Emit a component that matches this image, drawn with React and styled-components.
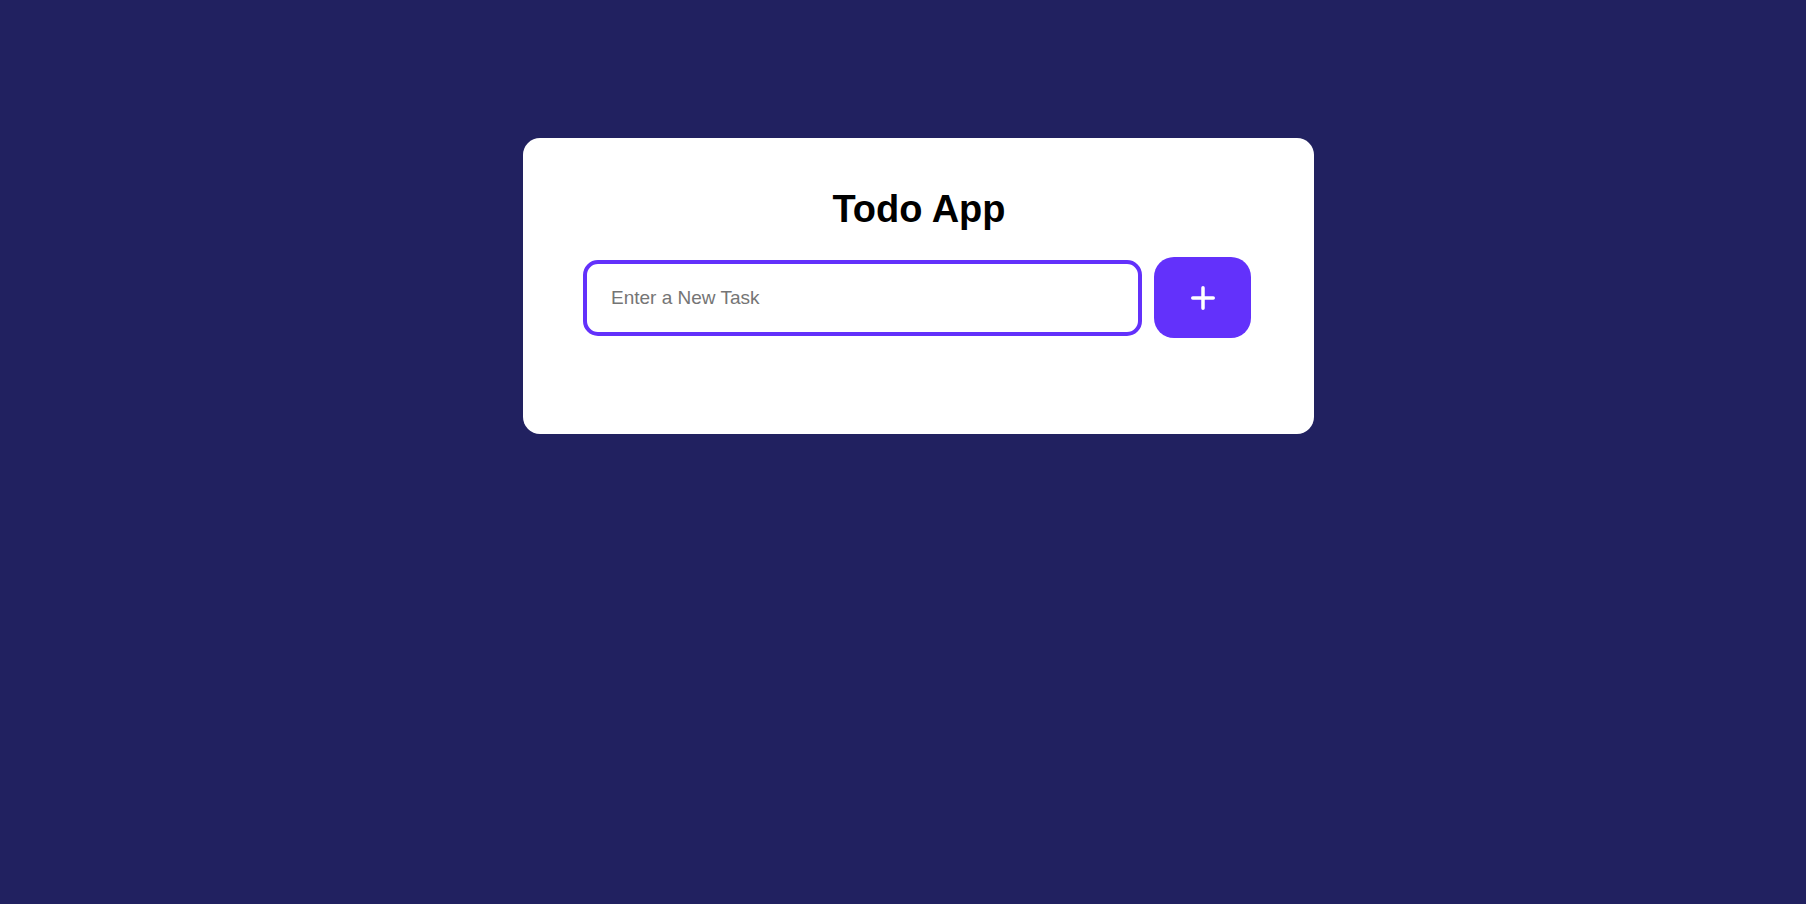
import React, { useState } from "react";
import styled, { createGlobalStyle } from "styled-components";

const GlobalStyle = createGlobalStyle`
  html, body {
    margin: 0;
    padding: 0;
    background: #212160;
    font-family: "Liberation Sans", Arial, sans-serif;
  }
`;

const Page = styled.div`
  min-height: 904px;
  box-sizing: border-box;
  display: flex;
  justify-content: center;
  align-items: flex-start;
  padding: 138px 0 0 31px;
`;

const Card = styled.div`
  width: 791px;
  box-sizing: border-box;
  background: #ffffff;
  border-radius: 17px;
  padding: 50px 63px 96px 60px;
  display: flex;
  flex-direction: column;
`;

const Title = styled.h1`
  margin: 0 0 26px;
  padding-left: 4px;
  font-size: 38px;
  font-weight: 700;
  text-align: center;
  color: #000;
  line-height: normal;
`;

const Row = styled.form`
  display: flex;
  align-items: center;
  gap: 12px;
`;

const TaskInput = styled.input`
  flex: 1;
  height: 76px;
  box-sizing: border-box;
  border: 4px solid #6331fb;
  border-radius: 15px;
  padding: 0 24px;
  font-family: "Liberation Sans", Arial, sans-serif;
  font-size: 19px;
  color: #222;
  outline: none;
  &::placeholder {
    color: #757575;
  }
`;

const AddButton = styled.button`
  width: 97px;
  height: 81px;
  border: none;
  border-radius: 20px;
  background: #6331fb;
  display: flex;
  align-items: center;
  justify-content: center;
  cursor: pointer;
  padding: 0;
`;

export default function App() {
  const [task, settask] = useState("");

  function handleSubmit(e) {
    e.preventDefault();
    settask("");
  }

  return (
    <>
      <GlobalStyle />
      <Page>
        <Card>
          <Title>Todo App</Title>
          <Row onSubmit={handleSubmit}>
            <TaskInput
              type="text"
              placeholder="Enter a New Task"
              value={task}
              onChange={(e) => settask(e.target.value)}
            />
            <AddButton type="submit" aria-label="Add task">
              <svg width="24" height="24" viewBox="0 0 24 24">
                <path
                  d="M12 1.75v20.5M1.75 12h20.5"
                  stroke="#fff"
                  strokeWidth="3.5"
                  strokeLinecap="round"
                />
              </svg>
            </AddButton>
          </Row>
        </Card>
      </Page>
    </>
  );
}
